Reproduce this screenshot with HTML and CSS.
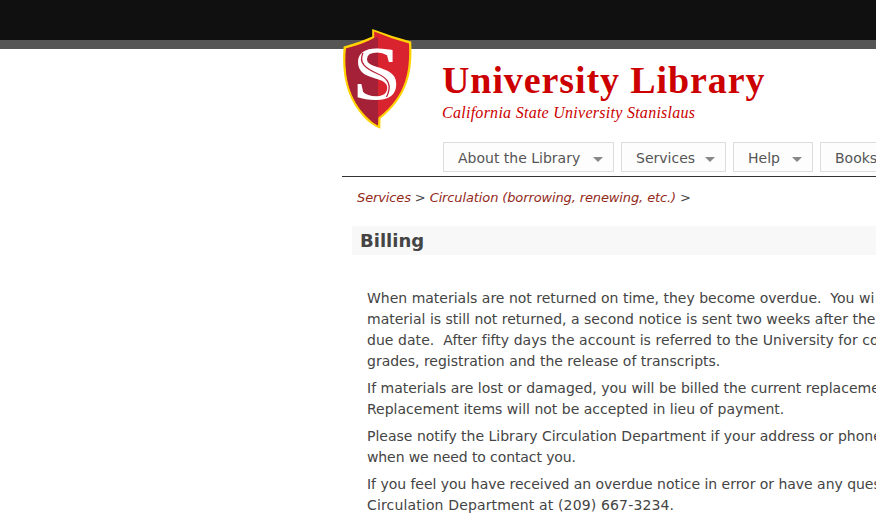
FILE: index.html
```html
<!DOCTYPE html>
<html lang="en">
<head>
<meta charset="utf-8">
<title>Billing | University Library</title>
<link rel="stylesheet" href="styles.css">
</head>
<body>
<div class="topbar"></div>
<div class="page">
  <header class="header">
    <svg class="logo" width="70" height="102" viewBox="7 8 70 102" role="img" aria-label="Stanislaus shield">
      <path d="M36.2 9 Q56 16.5 75.2 21.5 C76.5 48 74 75 44.5 98.5 L44.3 108.8 Q35 105 28 97.5 C12 80 5 58 7.6 26.5 Q24 22 36.2 16.5Z" fill="#ffd204"/>
      <path d="M38.2 11.5 Q56 19 73 23.5 C74 49 71.5 75 42.4 97.5 L42 105.6 Q36 102.5 30 96 C14 79 7.8 58 10 28.4 Q26 24.5 38.2 18Z" fill="#d9232f"/>
      <path d="M42 17 V105.6 Q36 102.5 30 96 C14 79 7.8 58 10 28.4 Q28 24.5 38.2 18Z" fill="#a52138"/>
      <text class="logo-letter" transform="translate(17.2 79) scale(1.1 1)">S</text>
      <path d="M27 33 C22 43 30 48.5 41 53.5 C52 58 56.5 65 50.5 77" fill="none" stroke="#bb2238" stroke-width="1.3"/>
    </svg>
    <div class="brand">
      <h1 class="site-name">University Library</h1>
      <p class="campus">California State University Stanislaus</p>
      <nav class="nav">
        <a class="tab t1"><span>About the Library</span><i class="arrow"></i></a>
        <a class="tab t2"><span>Services</span><i class="arrow"></i></a>
        <a class="tab t3"><span>Help</span><i class="arrow"></i></a>
        <a class="tab t4"><span>Books</span></a>
      </nav>
    </div>
  </header>
  <div class="crumbs"><a>Services</a> &gt; <a>Circulation (borrowing, renewing, etc.)</a> &gt;</div>
  <h2 class="title">Billing</h2>
  <main class="content">
    <p>When materials are not returned on time, they become overdue.&nbsp; You wi<br>material is still not returned, a second notice is sent two weeks after the<br><span class="looser">due date.&nbsp; After fifty days the account is referred to the University for co</span><br>grades, registration and the release of transcripts.</p>
    <p>If materials are lost or damaged, you will be billed the current replaceme<br>Replacement items will not be accepted in lieu of payment.</p>
    <p>Please notify the Library Circulation Department if your address or phone<br><span class="tight">when we need to contact you.</span></p>
    <p><span class="snug">If you feel you have received an overdue notice in error or have any ques</span><br><span class="wide">Circulation Department at (209) 667-3234.</span></p>
  </main>
</div>
</body>
</html>
```
FILE: styles.css
```css
* { box-sizing: border-box; }
html, body { height: 100%; }
body { margin: 0; overflow: hidden; background: #fff; color: #444; font: 14px/21px "DejaVu Sans", Verdana, sans-serif; }
h1, h2, p { margin: 0; white-space: nowrap; }
.topbar { height: 49px; background: #101010; border-bottom: 9px solid #555; }
.page { margin-left: 342px; overflow-x: clip; }
.header { display: flex; height: 128px; border-bottom: 1px solid #333; }
.logo { flex: none; margin-top: -21px; margin-left: 1px; }
.logo-letter { font: bold 76px "Liberation Serif", serif; fill: #fff; }
.brand { margin-left: 29px; padding-top: 9px; }
.site-name { font: bold 38px/44px "Liberation Serif", Georgia, serif; letter-spacing: .9px; color: #c00; }
.campus { font: italic 16px/22px "Liberation Serif", Georgia, serif; letter-spacing: .27px; color: #c00; }
.nav { display: flex; gap: 7px; margin: 18px 0 0 1px; }
.tab { display: flex; flex: none; justify-content: space-between; align-items: center; height: 30px; padding: 2px 10px 0 14px; border: 1px solid #ddd; background: #fdfdfd; color: #555; white-space: nowrap; }
.t1 { width: 171px; }
.t2 { width: 105px; }
.t3 { width: 80px; }
.t4 { width: 96px; }
.arrow { margin-top: 3px; border: 5px solid transparent; border-top-color: #888; border-bottom: 0; }
.crumbs { padding: 10px 0 0 15px; font-style: italic; font-size: 13px; letter-spacing: -.12px; white-space: nowrap; }
.crumbs a { color: #932a1b; }
.title { height: 29px; margin: 18px 0 33px 10px; padding-left: 8px; background: #f8f8f8; font-size: 18px; line-height: 29px; }
.content { padding-left: 25px; }
.content p { margin-bottom: 6px; }
.looser { letter-spacing: .05px; }
.snug { letter-spacing: -.03px; }
.tight { letter-spacing: -.1px; }
.wide { letter-spacing: .15px; }
```
